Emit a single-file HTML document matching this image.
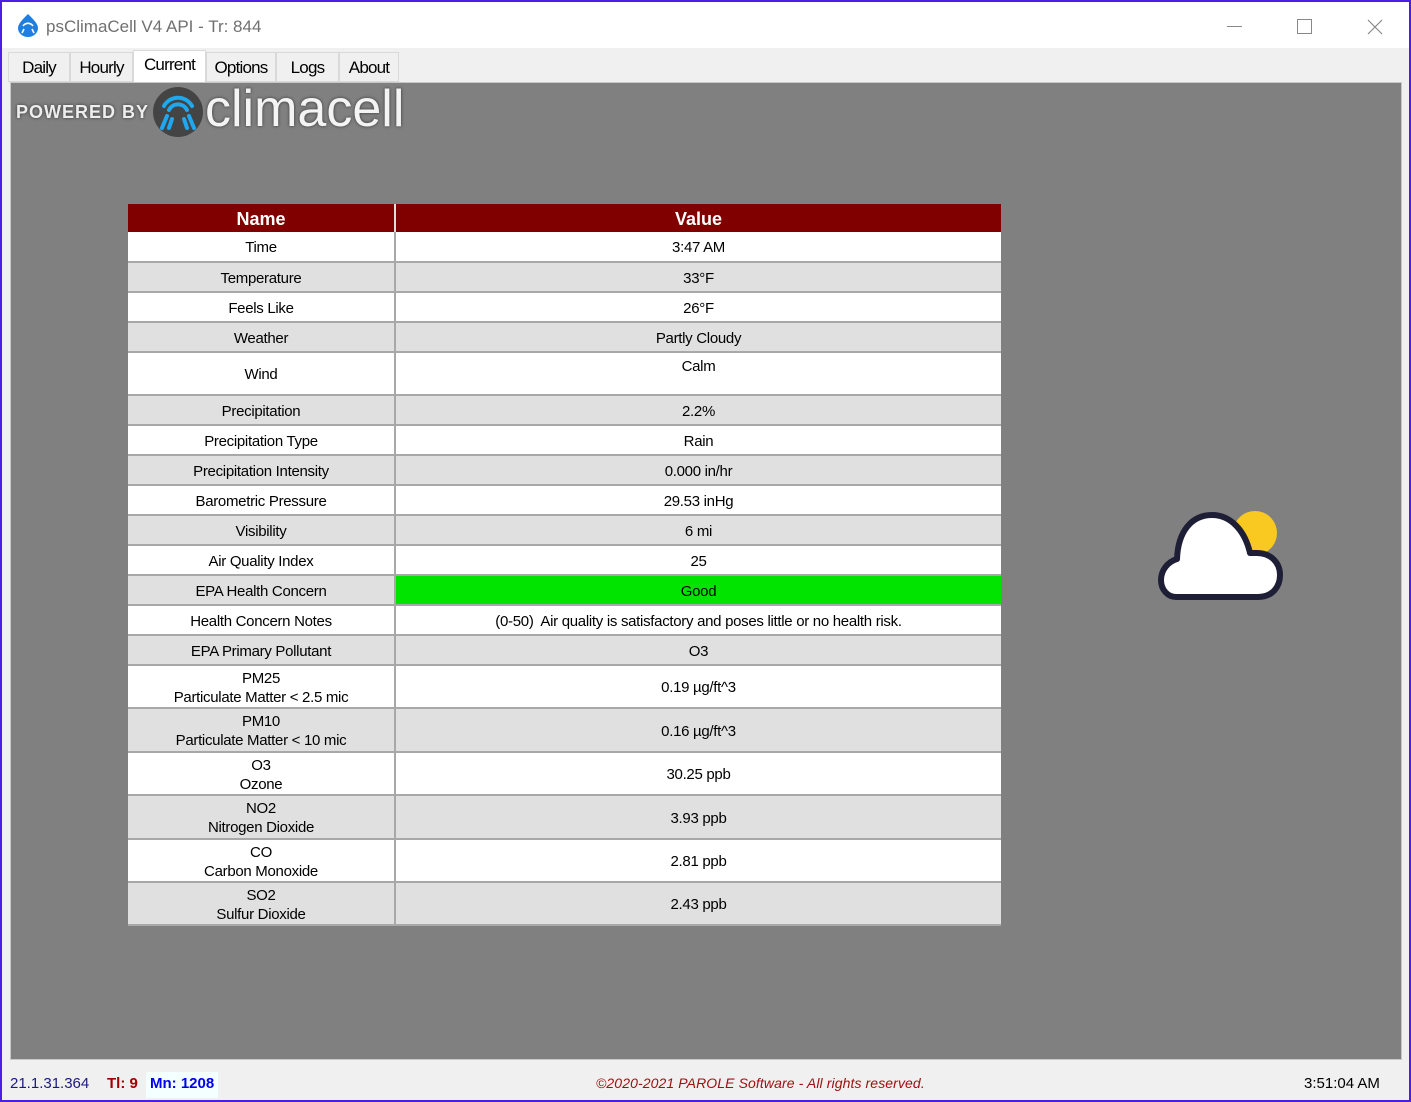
<!DOCTYPE html>
<html><head><meta charset="utf-8"><style>
*{margin:0;padding:0;box-sizing:border-box}
body{width:1411px;height:1102px;overflow:hidden;background:#4a1ee6;font-family:"Liberation Sans",sans-serif;position:relative}
#win{position:absolute;left:2px;top:2px;width:1407px;height:1098px;background:#f0f0f0}
#title{position:absolute;left:0;top:0;width:1407px;height:46px;background:#fff}
#title .t{position:absolute;left:44px;top:15px;font-size:17px;color:#707070}
.tab{position:absolute;top:50px;height:30px;border:1px solid #d9d9d9;background:#f0f0f0;font-size:17px;color:#000;padding-top:5px;text-align:center;letter-spacing:-0.8px}
#panel{position:absolute;left:8px;top:80px;width:1392px;height:978px;background:#808080;border:1px solid #c8c8c8}
.row{position:absolute;left:126px;width:873px;display:flex;border-bottom:2px solid #a8a8a8;font-size:15px;color:#000;letter-spacing:-0.3px}
.row div{display:flex;align-items:center;justify-content:center;text-align:center;line-height:19px;padding-top:2px}
.row .n{width:268px;border-right:2px solid #a8a8a8}
.row .v{flex:1}
.w{background:#fff}.g{background:#e0e0e0}
#status{position:absolute;left:0;top:1068px;width:1407px;height:28px;font-size:15px}
</style></head><body><div id="win">
<div id="title">
<svg style="position:absolute;left:15px;top:11px" width="22" height="24" viewBox="0 0 22 24"><path d="M11 1 C5 7 1 11 1 15 a10 9 0 0 0 20 0 C21 11 17 7 11 1Z" fill="#1e7fe0"/><path d="M6 13 a6 6 0 0 1 10 0 M7 16 l-2 4 M15 16 l2 4 M9 11 a3 3 0 0 1 4 0" stroke="#fff" stroke-width="1.6" fill="none"/></svg>
<div class="t">psClimaCell V4 API - Tr: 844</div>
<div style="position:absolute;left:1225px;top:24px;width:15px;height:1px;background:#888"></div>
<div style="position:absolute;left:1295px;top:17px;width:15px;height:15px;border:1px solid #888"></div>
<svg style="position:absolute;left:1365px;top:17px" width="16" height="16"><path d="M1 1L15 15M15 1L1 15" stroke="#888" stroke-width="1.2"/></svg>
</div>
<div class="tab" style="left:6px;width:62px">Daily</div>
<div class="tab" style="left:68px;width:63px">Hourly</div>
<div class="tab" style="left:131px;width:73px;top:48px;height:33px;background:#fff;padding-top:4px">Current</div>
<div class="tab" style="left:204px;width:70px">Options</div>
<div class="tab" style="left:274px;width:63px">Logs</div>
<div class="tab" style="left:337px;width:60px">About</div>
<div id="panel">
<div style="position:absolute;left:5px;top:19px;font-size:18px;font-weight:bold;color:#eee;letter-spacing:1px;text-shadow:0 0 3px #333">POWERED BY</div>
<svg style="position:absolute;left:141px;top:3px" width="52" height="52" viewBox="0 0 52 52"><circle cx="26" cy="26" r="25" fill="#444"/><path d="M12 20 a16 16 0 0 1 28 0 M17 24 a10 10 0 0 1 18 0 M15 30 l-5 12 M37 30 l5 12 M20 33 l-3 9 M32 33 l3 9" stroke="#1fa8f0" stroke-width="4" fill="none" stroke-linecap="round"/></svg>
<div style="position:absolute;left:194px;top:-4px;font-size:52px;color:#f4f4f4;letter-spacing:0px;text-shadow:0 0 3px #333">climacell</div>
<svg style="position:absolute;left:1147px;top:426px" width="130" height="94" viewBox="0 -2 130 94"><circle cx="97" cy="22" r="22" fill="#f9c922"/><path d="M18 86 H100 C115 86 122 75 122 64 C122 51 112 42 99 42 H92 C87 20 73 4 54 4 C34 4 20 20 19 48 C9 51 3 60 3 69 C3 79 10 86 18 86Z" fill="#fff" stroke="#1e1e36" stroke-width="6" stroke-linejoin="round"/></svg>
</div>
<div style="position:absolute;left:126px;top:202px;width:873px;height:28px;background:#800000;display:flex;color:#fff;font-weight:bold;font-size:18px">
<div style="width:268px;text-align:center;padding-top:5px;border-right:2px solid #ddd">Name</div><div style="flex:1;text-align:center;padding-top:5px">Value</div></div>
<div class="row w" style="top:230px;height:31px"><div class="n">Time</div><div class="v">3:47 AM</div></div>
<div class="row g" style="top:261px;height:30px"><div class="n">Temperature</div><div class="v">33°F</div></div>
<div class="row w" style="top:291px;height:30px"><div class="n">Feels Like</div><div class="v">26°F</div></div>
<div class="row g" style="top:321px;height:30px"><div class="n">Weather</div><div class="v">Partly Cloudy</div></div>
<div class="row w" style="top:351px;height:43px"><div class="n">Wind</div><div class="v" style="align-items:flex-start;padding-top:4px">Calm</div></div>
<div class="row g" style="top:394px;height:30px"><div class="n">Precipitation</div><div class="v">2.2%</div></div>
<div class="row w" style="top:424px;height:30px"><div class="n">Precipitation Type</div><div class="v">Rain</div></div>
<div class="row g" style="top:454px;height:30px"><div class="n">Precipitation Intensity</div><div class="v">0.000 in/hr</div></div>
<div class="row w" style="top:484px;height:30px"><div class="n">Barometric Pressure</div><div class="v">29.53 inHg</div></div>
<div class="row g" style="top:514px;height:30px"><div class="n">Visibility</div><div class="v">6 mi</div></div>
<div class="row w" style="top:544px;height:30px"><div class="n">Air Quality Index</div><div class="v">25</div></div>
<div class="row g" style="top:574px;height:30px"><div class="n">EPA Health Concern</div><div class="v" style="background:#00e400">Good</div></div>
<div class="row w" style="top:604px;height:30px"><div class="n">Health Concern Notes</div><div class="v">(0-50)&nbsp; Air quality is satisfactory and poses little or no health risk.</div></div>
<div class="row g" style="top:634px;height:30px"><div class="n">EPA Primary Pollutant</div><div class="v">O3</div></div>
<div class="row w" style="top:664px;height:43px"><div class="n">PM25<br>Particulate Matter &lt; 2.5 mic</div><div class="v">0.19 µg/ft^3</div></div>
<div class="row g" style="top:707px;height:44px"><div class="n">PM10<br>Particulate Matter &lt; 10 mic</div><div class="v">0.16 µg/ft^3</div></div>
<div class="row w" style="top:751px;height:43px"><div class="n">O3<br>Ozone</div><div class="v">30.25 ppb</div></div>
<div class="row g" style="top:794px;height:44px"><div class="n">NO2<br>Nitrogen Dioxide</div><div class="v">3.93 ppb</div></div>
<div class="row w" style="top:838px;height:43px"><div class="n">CO<br>Carbon Monoxide</div><div class="v">2.81 ppb</div></div>
<div class="row g" style="top:881px;height:43px"><div class="n">SO2<br>Sulfur Dioxide</div><div class="v">2.43 ppb</div></div>
<div id="status">
<span style="position:absolute;left:8px;top:5px;color:#1a1a80">21.1.31.364</span>
<span style="position:absolute;left:105px;top:5px;color:#a00000;font-weight:bold">Tl: 9</span>
<span style="position:absolute;left:144px;top:2px;height:26px;padding:3px 4px;background:#f4ffff;color:#0000ee;font-weight:bold">Mn: 1208</span>
<span style="position:absolute;left:594px;top:5px;color:#a01010;font-style:italic;font-size:14px;letter-spacing:0.1px">©2020-2021 PAROLE Software - All rights reserved.</span>
<span style="position:absolute;left:1302px;top:5px;color:#000">3:51:04 AM</span>
</div>
</div></body></html>
